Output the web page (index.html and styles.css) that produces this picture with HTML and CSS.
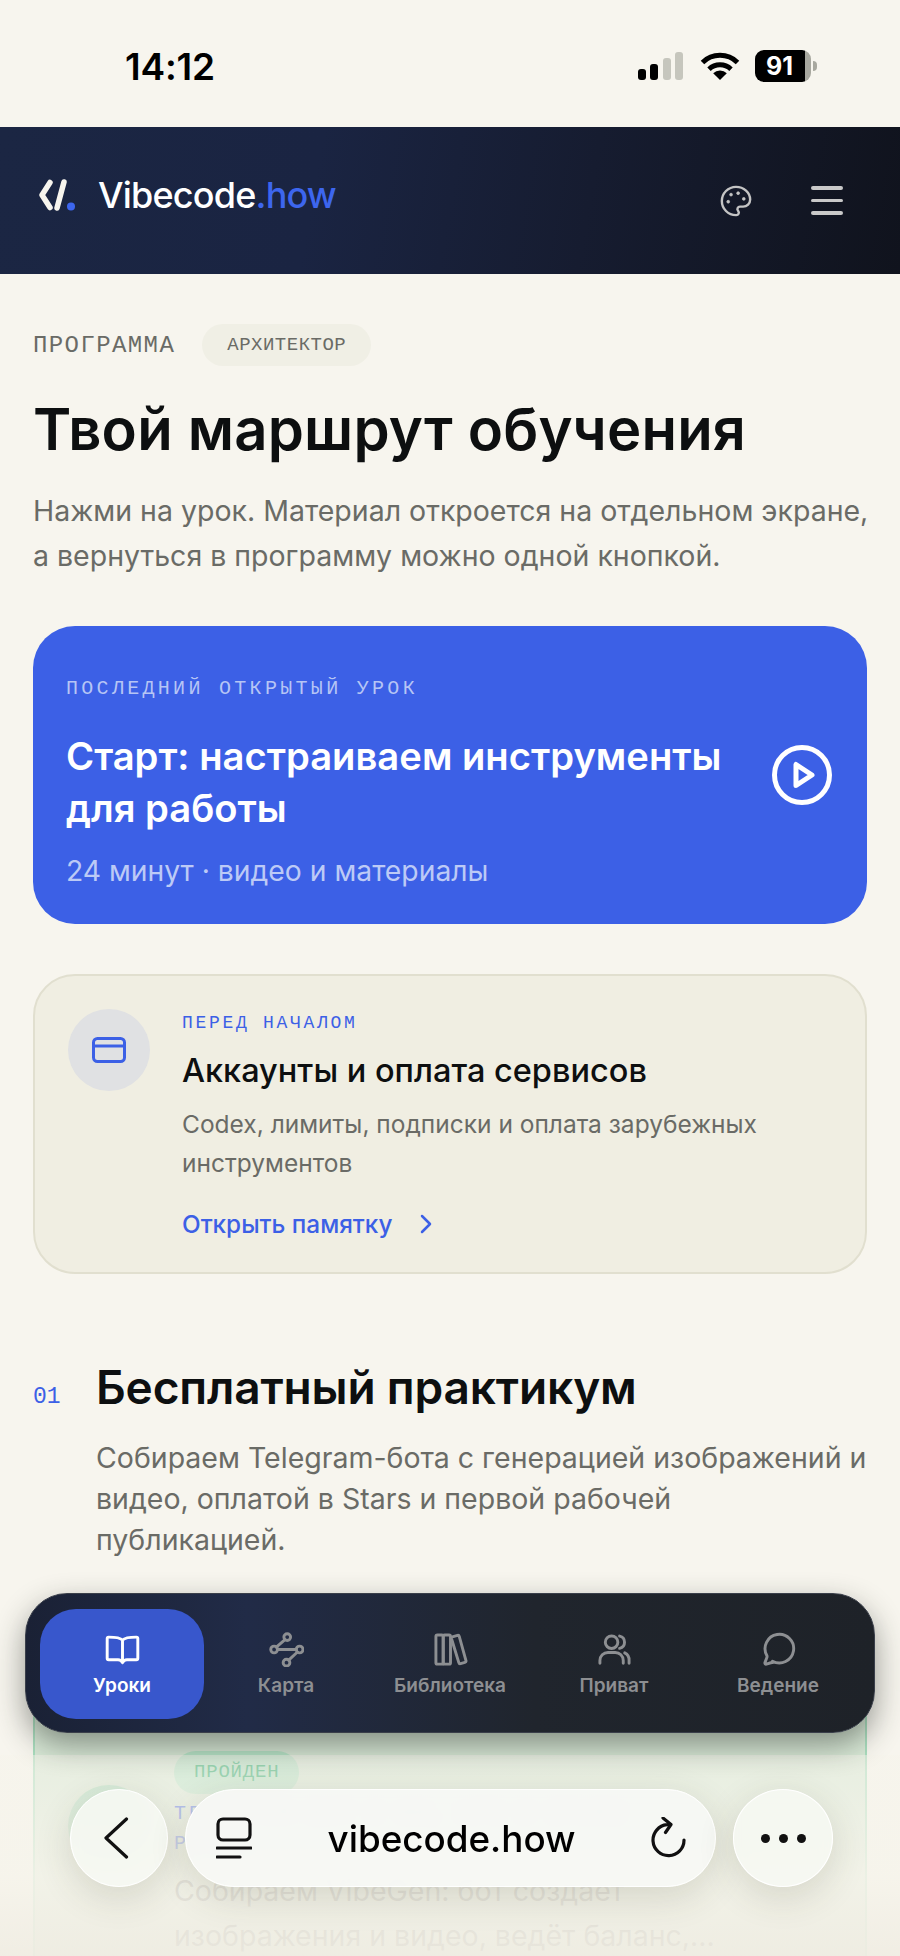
FILE: index.html
```html
<!DOCTYPE html>
<html lang="ru">
<head>
    <meta charset="UTF-8">
    <meta name="viewport" content="width=device-width, initial-scale=1.0">
    <title>Vibecode.how - Программа</title>
    <link rel="stylesheet" href="styles.css">
</head>
<body>

<div class="page">
    <div class="status-bar">
        <span class="status-time">14:12</span>
        <div class="status-icons">
            <div class="signal">
                <span class="signal-bar bar-1"></span>
                <span class="signal-bar bar-2"></span>
                <span class="signal-bar bar-3"></span>
                <span class="signal-bar bar-4"></span>
            </div>
            <svg class="wifi" viewBox="0 0 40 28">
                <path d="M2.5 10.5a25 25 0 0 1 35 0M9 17.2a16 16 0 0 1 22 0" fill="none" stroke="#000" stroke-width="5"/>
                <path d="M20 28l-6.8-6.8a9.6 9.6 0 0 1 13.6 0z" fill="#000"/>
            </svg>
            <div class="battery"><span>91</span></div>
            <span class="battery-nub"></span>
        </div>
    </div>

    <header class="site-header">
        <div class="logo">
            <svg class="logo-mark" viewBox="0 0 37 32">
                <path d="M11 3.500L3 16l8 12.500" fill="none" stroke="#f7f5ee" stroke-width="5.500" stroke-linecap="round" stroke-linejoin="round"/>
                <path d="M25 3L18 29" fill="none" stroke="#f7f5ee" stroke-width="5.500" stroke-linecap="round"/>
                <circle cx="32" cy="27.500" r="4" fill="#3d66ee"/>
            </svg>
            <span class="logo-text">Vibecode<span class="logo-accent">.how</span></span>
        </div>
        <div class="header-actions">
            <svg class="palette-icon" viewBox="0 0 24 24">
                <path d="M12 22a1 1 0 0 1 0-20 10 9 0 0 1 10 9 5 5 0 0 1-5 5h-2.250a1.750 1.750 0 0 0-1.400 2.800l.3.4a1.750 1.750 0 0 1-1.400 2.800z"/>
                <circle class="dot" cx="13.500" cy="6.500" r="1"/>
                <circle class="dot" cx="17.500" cy="10.500" r="1"/>
                <circle class="dot" cx="6.500" cy="12.500" r="1"/>
                <circle class="dot" cx="8.500" cy="7.500" r="1"/>
            </svg>
            <div class="burger"><span></span><span></span><span></span></div>
        </div>
    </header>

    <main class="content">
        <div class="eyebrow-row">
            <span class="eyebrow">ПРОГРАММА</span>
            <span class="level-pill">АРХИТЕКТОР</span>
        </div>
        <h1 class="page-title">Твой маршрут обучения</h1>
        <p class="page-lead">Нажми на урок. Материал откроется на отдельном экране,<br>а вернуться в программу можно одной кнопкой.</p>

        <section class="hero-card">
            <div class="hero-body">
                <div class="hero-eyebrow">ПОСЛЕДНИЙ ОТКРЫТЫЙ УРОК</div>
                <h2 class="hero-title">Старт: настраиваем инструменты для работы</h2>
                <div class="hero-meta">24 минут · видео и материалы</div>
            </div>
            <svg class="play-icon" viewBox="0 0 60 60">
                <circle cx="30" cy="30" r="27.500"/>
                <path d="M24 19.500v21l16-10.500z"/>
            </svg>
        </section>

        <section class="notice-card">
            <div class="notice-icon">
                <svg viewBox="0 0 34 26">
                    <rect x="1.500" y="1.500" width="31" height="23" rx="4"/>
                    <path d="M1.500 9h31"/>
                </svg>
            </div>
            <div class="notice-body">
                <div class="notice-eyebrow">ПЕРЕД НАЧАЛОМ</div>
                <h3 class="notice-title">Аккаунты и оплата сервисов</h3>
                <p class="notice-text">Codex, лимиты, подписки и оплата зарубежных инструментов</p>
                <a class="notice-link" href="#">Открыть памятку
                    <svg viewBox="0 0 12 20"><path d="M2 2l8 8-8 8"/></svg>
                </a>
            </div>
        </section>

        <section class="module">
            <span class="module-num">01</span>
            <div class="module-body">
                <h2 class="module-title">Бесплатный практикум</h2>
                <p class="module-text">Собираем Telegram-бота с генерацией изображений и видео, оплатой в Stars и первой рабочей публикацией.</p>
            </div>
        </section>

        <section class="lesson-card">
            <div class="lesson-icon"></div>
            <div class="lesson-body">
                <span class="done-pill">ПРОЙДЕН</span>
                <div class="lesson-tags">ТЕЛЕГРАМ-БОТ С ИИ, API И STARS<br>РЕЛИЗ</div>
                <p class="lesson-text">Собираем VibeGen: бот создает изображения и видео, ведёт баланс,...</p>
            </div>
        </section>
    </main>

    <div class="toolbar-fade"></div>

    <nav class="tab-bar">
        <div class="tab tab-active">
            <svg viewBox="0 0 24 24"><path d="M12 5.500C10.500 4 8 3.500 2.500 3.500a1 1 0 0 0-1 1V18a1 1 0 0 0 1 1h6.500c1.300 0 2.300.6 3 2 .7-1.400 1.700-2 3-2h6.500a1 1 0 0 0 1-1V4.500a1 1 0 0 0-1-1C16 3.500 13.500 4 12 5.500zM12 5.500V21"/></svg>
            <span>Уроки</span>
        </div>
        <div class="tab">
            <svg viewBox="0 0 24 24">
                <circle cx="12.500" cy="3.500" r="2.300"/><circle cx="3.500" cy="12" r="2.300"/><circle cx="21" cy="12" r="2.300"/><circle cx="12" cy="21" r="2.300"/>
                <path d="M11 5.200L5 10.300M5.800 12h12.900M19.500 13.700L13.500 19.300"/>
            </svg>
            <span>Карта</span>
        </div>
        <div class="tab">
            <svg viewBox="0 0 24 24">
                <rect x="2" y="2" width="5" height="20" rx="1"/><rect x="7" y="2" width="5" height="20" rx="1"/>
                <path d="M13.300 3.400l3.500-1.100a1 1 0 0 1 1.200.7l4.600 16.600a1 1 0 0 1-.7 1.200l-3 .9a1 1 0 0 1-1.200-.7L12.700 4.600a1 1 0 0 1 .6-1.200z"/>
            </svg>
            <span>Библиотека</span>
        </div>
        <div class="tab">
            <svg viewBox="0 0 24 24">
                <circle cx="10" cy="7" r="4.300"/>
                <path d="M2 21.500v-2a5.500 5.500 0 0 1 5.500-5.500h5a5.500 5.500 0 0 1 5.500 5.500v2M15.500 2.800a4.300 4.300 0 0 1 0 8.400M19 14.300a5.500 5.500 0 0 1 3 5.200v2"/>
            </svg>
            <span>Приват</span>
        </div>
        <div class="tab">
            <svg viewBox="0 0 24 24"><path d="M7.900 20A9.800 9.800 0 1 0 4 16.100c.2.400.2.800.1 1.200L2.700 21c-.2.700.4 1.200 1 1l3-.9c.4-.1.800-.1 1.200-.1z"/></svg>
            <span>Ведение</span>
        </div>
    </nav>

    <div class="browser-bar">
        <button class="round-button">
            <svg class="back-icon" viewBox="0 0 26 42"><path d="M23.500 2L3 21l20.500 19"/></svg>
        </button>
        <div class="url-pill">
            <svg class="tabs-icon" viewBox="0 0 36 42">
                <rect x="2" y="2" width="32" height="21" rx="5"/>
                <path d="M1 31h34M1 40h23"/>
            </svg>
            <span class="url-text">vibecode.how</span>
            <svg class="reload-icon" viewBox="0 0 36 42">
                <path d="M33 23a15.500 15.500 0 1 1-17-15.300h3M12 1l8 6.500-5.500 8"/>
            </svg>
        </div>
        <button class="round-button more-button">
            <span></span><span></span><span></span>
        </button>
    </div>
</div>

</body>
</html>
```

FILE: styles.css
```css
* {
    box-sizing: border-box;
}

body {
    font-family: Inter, 'Noto Sans', sans-serif;
    margin: 0;
    padding: 0;
    background-color: #f7f5ee;
    color: #0d0f10;
}

h1, h2, h3, p {
    margin: 0;
}

.page {
    position: relative;
    width: 900px;
    height: 1956px;
    overflow: hidden;
}

/* status bar */
.status-bar {
    height: 127px;
    display: flex;
    justify-content: space-between;
    padding: 47px 83px 0 125px;
}

.status-time {
    font-size: 37px;
    font-weight: 600;
    line-height: 40px;
    letter-spacing: -0.200px;
    color: #000;
}

.status-icons {
    display: flex;
    align-items: flex-start;
    height: 32px;
    margin-top: 3px;
}

.signal {
    display: flex;
    align-items: flex-end;
    gap: 4.500px;
    height: 30px;
    margin-right: 17px;
}

.signal-bar {
    width: 8px;
    border-radius: 3px;
    background-color: #000;
}

.bar-1 { height: 11px; }
.bar-2 { height: 16px; }
.bar-3 { height: 22px; background-color: #c6c6bd; }
.bar-4 { height: 28px; background-color: #c6c6bd; }

.wifi {
    width: 40px;
    height: 28px;
    margin: 2px 15px 0 0;
}

.battery {
    width: 56px;
    height: 32px;
    border-radius: 9px;
    background: linear-gradient(90deg, #000 89%, #a8a89f 89%);
    color: #fff;
    font-size: 25px;
    font-weight: 700;
    line-height: 32px;
    padding-left: 11px;
}

.battery-nub {
    width: 4px;
    height: 10px;
    margin: 11px 0 0 2px;
    border-radius: 0 4px 4px 0;
    background-color: #a8a89f;
}

/* header */
.site-header {
    height: 147px;
    display: flex;
    justify-content: space-between;
    align-items: center;
    padding: 0 57px 0 39px;
    background: linear-gradient(100deg, #1b2643 0%, #1a2442 35%, #161c30 65%, #10131d 100%);
}

.logo {
    display: flex;
    align-items: center;
    gap: 22px;
    margin-top: -11px;
}

.logo-mark {
    width: 37px;
    height: 32px;
}

.logo-text {
    color: #fff;
    font-size: 36px;
    font-weight: 500;
    letter-spacing: -0.8px;
}

.logo-accent {
    color: #3d66ee;
}

.header-actions {
    display: flex;
    align-items: center;
    gap: 58px;
}

.palette-icon {
    width: 34px;
    height: 34px;
    fill: none;
    stroke: #c4c4c4;
    stroke-width: 1.7;
}

.palette-icon .dot {
    fill: #c4c4c4;
    stroke-width: 0.5;
}

.burger {
    display: flex;
    flex-direction: column;
    gap: 9px;
    width: 32px;
}

.burger span {
    height: 3.500px;
    border-radius: 2px;
    background-color: #c9c9c9;
}

/* content */
.content {
    padding: 50px 33px 0;
}

.eyebrow-row {
    display: flex;
    align-items: center;
    gap: 27px;
    height: 42px;
}

.eyebrow {
    font-family: 'Liberation Mono', monospace;
    font-size: 24px;
    letter-spacing: 1.400px;
    color: #6a6b66;
}

.level-pill {
    display: flex;
    align-items: center;
    height: 42px;
    padding: 0 25px;
    border-radius: 21px;
    background-color: #f0efe5;
    font-family: 'Liberation Mono', monospace;
    font-size: 19px;
    letter-spacing: 0.500px;
    color: #6a6b66;
}

.page-title {
    margin-top: 28px;
    font-size: 58px;
    font-weight: 600;
    line-height: 70px;
    letter-spacing: 0.200px;
}

.page-lead {
    margin-top: 24px;
    margin-right: -4px;
    font-size: 28.500px;
    line-height: 45px;
    white-space: nowrap;
    color: #6a6b66;
}

/* last opened lesson */
.hero-card {
    display: flex;
    align-items: center;
    justify-content: space-between;
    height: 298px;
    margin-top: 48px;
    padding: 0 35px 0 33px;
    border-radius: 42px;
    background-color: #3c60e6;
    color: #fff;
}

.hero-body {
    align-self: flex-start;
    width: 680px;
    padding-top: 51px;
}

.hero-eyebrow {
    font-family: 'Liberation Mono', monospace;
    font-size: 20px;
    letter-spacing: 3.300px;
    color: #b6c5f5;
}

.hero-title {
    margin-top: 30px;
    font-size: 38.200px;
    font-weight: 600;
    line-height: 52px;
}

.hero-meta {
    margin-top: 19px;
    font-size: 28.300px;
    line-height: 36px;
    color: #bccaf6;
}

.play-icon {
    width: 60px;
    height: 60px;
    fill: none;
    stroke: #fff;
    stroke-width: 5;
    stroke-linejoin: round;
}

/* accounts notice */
.notice-card {
    display: flex;
    gap: 32px;
    height: 300px;
    margin-top: 50px;
    padding: 33px 33px 0 33px;
    border: 2px solid #e1dfcf;
    border-radius: 42px;
    background-color: #f0eee2;
}

.notice-icon {
    display: flex;
    align-items: center;
    justify-content: center;
    flex: none;
    width: 82px;
    height: 82px;
    border-radius: 50%;
    background-color: #e0e1e3;
}

.notice-icon svg {
    width: 34px;
    height: 26px;
    fill: none;
    stroke: #3c60e6;
    stroke-width: 3;
}

.notice-body {
    padding-top: 3px;
}

.notice-eyebrow {
    font-family: 'Liberation Mono', monospace;
    font-size: 18px;
    line-height: 22px;
    letter-spacing: 2.700px;
    color: #3c60e6;
}

.notice-title {
    margin-top: 17px;
    font-size: 32.500px;
    font-weight: 500;
    line-height: 40px;
}

.notice-text {
    margin-top: 14px;
    font-size: 24.500px;
    line-height: 39px;
    color: #6a6b66;
}

.notice-link {
    display: flex;
    align-items: center;
    gap: 28px;
    margin-top: 23px;
    font-size: 24.300px;
    font-weight: 500;
    line-height: 36px;
    color: #3c60e6;
    text-decoration: none;
}

.notice-link svg {
    width: 12px;
    height: 20px;
    fill: none;
    stroke: #3c60e6;
    stroke-width: 2.500;
    stroke-linecap: round;
    stroke-linejoin: round;
}

/* modules */
.module {
    display: flex;
    margin-top: 82px;
}

.module-num {
    flex: none;
    width: 63px;
    padding-top: 28px;
    font-family: 'Liberation Mono', monospace;
    font-size: 23px;
    color: #3c60e6;
}

.module-title {
    font-size: 46px;
    font-weight: 600;
    line-height: 62px;
    letter-spacing: -0.150px;
}

.module-text {
    margin-top: 19px;
    font-size: 28.500px;
    line-height: 41px;
    color: #6a6b66;
}

.lesson-card {
    display: flex;
    gap: 24px;
    height: 400px;
    margin-top: 70px;
    padding: 119px 33px 0;
    border: 2px solid #a9dcbd;
    border-radius: 42px;
    background-color: #d8e8d6;
}

.lesson-icon {
    flex: none;
    width: 82px;
    height: 82px;
    margin-top: 34px;
    border-radius: 50%;
    background-color: #a8dcbc;
}

.done-pill {
    display: inline-block;
    height: 43px;
    padding: 0 20px;
    border-radius: 22px;
    background-color: #b6e2c6;
    font-family: 'Liberation Mono', monospace;
    font-size: 19px;
    line-height: 43px;
    letter-spacing: 0.800px;
    color: #2fae6f;
}

.lesson-tags {
    margin-top: 5px;
    font-family: 'Liberation Mono', monospace;
    font-size: 20px;
    line-height: 30px;
    letter-spacing: 3px;
    color: #3c60e6;
}

.lesson-text {
    max-width: 580px;
    margin-top: 9px;
    font-size: 28.500px;
    line-height: 45px;
    color: #6a6b66;
}

/* overlays at the bottom of the screen */
.toolbar-fade {
    position: absolute;
    left: 0;
    right: 0;
    top: 1755px;
    bottom: 0;
    background: linear-gradient(180deg, rgba(246, 244, 235, 0.5), rgba(246, 244, 235, 0.86) 60%, rgba(240, 237, 227, 0.94));
}

.tab-bar {
    position: absolute;
    left: 25px;
    top: 1593px;
    width: 850px;
    height: 140px;
    display: flex;
    justify-content: space-between;
    padding: 15px 14px;
    border: 1px solid #3a3f4a;
    border-radius: 42px;
    background: linear-gradient(90deg, #1a2135 0%, #212b47 26%, #20252d 60%, #1e2228 100%);
    box-shadow: 0 12px 30px rgba(30, 35, 30, 0.45);
}

.tab {
    display: flex;
    flex-direction: column;
    align-items: center;
    width: 164px;
    height: 110px;
    padding-top: 23px;
    border-radius: 36px;
    color: #8d8f92;
    font-size: 19px;
    font-weight: 600;
}

.tab svg {
    width: 35px;
    height: 35px;
    margin-bottom: 7px;
    fill: none;
    stroke: #8d8f92;
    stroke-width: 2;
    stroke-linecap: round;
    stroke-linejoin: round;
}

.tab-active {
    background-color: #3857cc;
    color: #fff;
}

.tab-active svg {
    stroke: #fff;
}

.browser-bar {
    position: absolute;
    left: 70px;
    top: 1789px;
    display: flex;
    justify-content: space-between;
    width: 763px;
    height: 98px;
}

.round-button {
    display: flex;
    align-items: center;
    justify-content: center;
    width: 98px;
    height: 98px;
    padding: 0;
    border: 1px solid #fff;
    border-radius: 50%;
    background-color: rgba(246, 248, 243, 0.88);
    backdrop-filter: blur(6px);
    box-shadow: 0 10px 36px rgba(60, 60, 40, 0.16);
}

.back-icon {
    width: 26px;
    height: 42px;
    margin-right: 6px;
    fill: none;
    stroke: #111;
    stroke-width: 3.200;
    stroke-linecap: round;
    stroke-linejoin: round;
}

.url-pill {
    position: absolute;
    left: 115px;
    width: 531px;
    height: 98px;
    display: flex;
    align-items: center;
    justify-content: space-between;
    padding: 0 28px 0 30px;
    border: 1px solid #fff;
    border-radius: 49px;
    background-color: rgba(247, 248, 244, 0.94);
    backdrop-filter: blur(6px);
    box-shadow: 0 10px 36px rgba(60, 60, 40, 0.16);
}

.tabs-icon,
.reload-icon {
    width: 36px;
    height: 42px;
    fill: none;
    stroke: #111;
    stroke-width: 3.200;
    stroke-linecap: round;
    stroke-linejoin: round;
}

.url-text {
    font-size: 36.800px;
    font-weight: 500;
    color: #000;
}

.more-button {
    width: 100px;
    gap: 9px;
}

.more-button span {
    width: 9px;
    height: 9px;
    border-radius: 50%;
    background-color: #111;
}
```
